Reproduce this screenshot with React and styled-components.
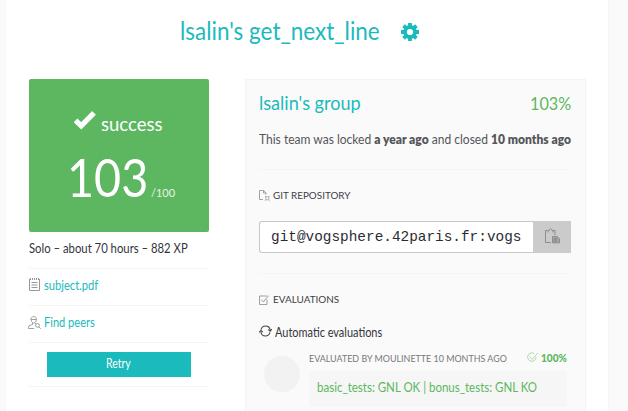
import React, { useLayoutEffect, useRef, useState } from "react";
import styled, { createGlobalStyle } from "styled-components";

const teal = "#1bbabc";
const green = "#5db761";

const GlobalStyle = createGlobalStyle`
  * { box-sizing: border-box; }
  body {
    margin: 0;
    overflow: hidden;
    background: #fafafa;
    font-family: Lato, "Open Sans", sans-serif;
    color: #33343c;
  }
`;

const Page = styled.main`
  width: 602px;
  height: 411px;
  margin-left: 6px;
  overflow: hidden;
  background: #fff;
  box-shadow: 0 0 0 1px #f5f5f5;
`;

const Title = styled.h1`
  display: flex;
  align-items: center;
  height: 61px;
  margin: 0 0 18px;
  padding: 1px 0 0 174px;
  gap: 21px;
  color: ${teal};
  font-size: 24.5px;
  font-weight: 400;
  line-height: 60px;
`;

const Columns = styled.div`
  display: flex;
  align-items: flex-start;
  gap: 36px;
  padding-left: 23px;
`;

const Sidebar = styled.aside`
  width: 180px;
`;

const ScoreCard = styled.section`
  height: 153px;
  padding: 32px 0 0 38px;
  border-radius: 2px;
  background: ${green};
  color: #fff;
`;

const Status = styled.div`
  display: flex;
  gap: 5px;
  height: 28px;
  padding-left: 7px;
  font-size: 18.5px;
  line-height: 27px;
`;

const Score = styled.div`
  display: flex;
  align-items: baseline;
  gap: 3px;
  margin-top: 6px;
  font-size: 53px;
  font-weight: 400;
  line-height: 64px;
`;

const ScoreMax = styled.span`
  font-size: 11px;
  font-weight: 400;
  line-height: 14px;
  opacity: 0.85;
`;

const SideRow = styled.div`
  display: flex;
  align-items: center;
  gap: ${(p) => p.$gap || 0}px;
  height: 37px;
  padding-bottom: ${(p) => p.$lift || 4}px;
  border-bottom: 1px solid #f4f4f4;
  color: ${(p) => (p.$link ? teal : "#33343c")};
  font-size: 12.6px;
`;

const ActionRow = styled(SideRow)`
  justify-content: center;
  height: 44px;
  padding: 0;
`;

const Button = styled.button`
  width: 144px;
  height: 25px;
  margin-bottom: 1px;
  padding: 0 1px 2px 0;
  border: 0;
  background: ${teal};
  color: #fff;
  font: 13px/23px Lato, sans-serif;
`;

const Panel = styled.section`
  width: 341px;
  height: 340px;
  padding: 0 14px 0 13px;
  border: 1px solid #f4f4f4;
  background: #fafafa;
`;

const TeamHeader = styled.header`
  display: flex;
  justify-content: space-between;
  align-items: baseline;
  height: 44px;
  color: ${teal};
  font-size: 19.5px;
  line-height: 45px;
`;

const TeamScore = styled.span`
  color: ${green};
  font-size: 17px;
`;

const LockInfo = styled.p`
  height: 46px;
  margin: 0;
  border-bottom: 1px solid #f5f5f5;
  color: #55565a;
  font-size: 12.5px;
  line-height: 32px;
  b { font-weight: 800; }
`;

const SectionTitle = styled.h2`
  display: flex;
  align-items: center;
  gap: ${(p) => p.$gap}px;
  height: 51px;
  margin: 0;
  padding-bottom: 1px;
  color: #3e3f45;
  font-size: 10.4px;
  font-weight: 400;
`;

const RepoField = styled.div`
  display: flex;
  height: 32px;
  margin-bottom: 20px;
`;

const RepoUrl = styled.div`
  width: 274px;
  padding-left: 11px;
  border: 1px solid #c8c8c8;
  border-right: 0;
  border-radius: 3px 0 0 3px;
  background: #fff;
  color: #2b2c33;
  font: 14.4px/31px "Liberation Mono", monospace;
`;

const CopyButton = styled.button`
  display: flex;
  align-items: center;
  justify-content: center;
  width: 38px;
  padding: 0 1px 3px 0;
  border: 0;
  background: #cbcbcb;
`;

const RepoBlock = styled.div`
  height: 104px;
  border-bottom: 1px solid #f5f5f5;
`;

const AutoTitle = styled.h3`
  display: flex;
  align-items: center;
  gap: 3px;
  height: 15px;
  margin: 0;
  font-size: 12.6px;
  font-weight: 400;
`;

const Evaluation = styled.article`
  display: grid;
  grid-template-columns: 36px 258px;
  gap: 9px;
  padding: 9px 0 0 5px;
`;

const Avatar = styled.div`
  width: 36px;
  height: 36px;
  margin-top: 7px;
  border-radius: 50%;
  background: #f2f2f2;
`;

const EvalHeader = styled.div`
  display: flex;
  align-items: center;
  height: 22px;
  padding-bottom: 4px;
  color: #77787b;
  font-size: 10.2px;
`;

const EvalScore = styled.span`
  display: flex;
  align-items: center;
  gap: 2px;
  margin-left: auto;
  color: ${green};
  font-size: 10.5px;
  font-weight: 900;
`;

const Feedback = styled.div`
  height: 36px;
  padding-left: 8px;
  border-radius: 2px;
  background: #f6f6f6;
  color: ${green};
  font-size: 12.6px;
  line-height: 34px;
`;

const FitBox = styled.span`
  display: inline-block;
  width: ${(p) => p.$width}px;
  white-space: nowrap;
`;

const FitText = styled.span`
  display: inline-block;
  transform-origin: 0 50%;
`;

/* Condenses or widens a line of text to a set width. */
function Fit({ width, children }) {
  const ref = useRef(null);
  const [scale, setScale] = useState(1);
  useLayoutEffect(() => {
    setScale(width / ref.current.offsetWidth);
  }, [width]);
  return (
    <FitBox $width={width}>
      <FitText ref={ref} style={{ transform: `scaleX(${scale})` }}>{children}</FitText>
    </FitBox>
  );
}

const Icon = styled.svg`
  display: block;
  flex: none;
  fill: none;
  stroke: ${(p) => p.$color || "#969696"};
  stroke-width: ${(p) => p.$stroke || 1};
  margin-top: ${(p) => p.$top || 0}px;
  margin-left: ${(p) => p.$left || 0}px;
`;

const GearIcon = () => (
  <Icon width="18" height="18" viewBox="0 0 18 18" $color={teal} $stroke={3.8} $top={1}>
    <circle cx="9" cy="9" r="5" />
    <path d="M9 0v4M9 14v4M0 9h4M14 9h4M2.6 2.6l2.8 2.8M12.6 12.6l2.8 2.8M2.6 15.4l2.8-2.8M12.6 5.4l2.8-2.8" />
  </Icon>
);

const CheckIcon = () => (
  <Icon width="22" height="19" viewBox="0 0 22 19" $color="#fff" $stroke={5.2}>
    <path d="M1.6 9.4 7.2 14.8 20 1.9" />
  </Icon>
);

const NotesIcon = () => (
  <Icon width="11" height="13" viewBox="0 0 11 13" $top={-2}>
    <path d="M.5 1v11.500h10V1" />
    <path d="M1 1h9" strokeWidth="2" strokeDasharray="1 1" />
    <path d="M2.500 4.500h6M2.500 7h6M2.500 9.500h6" />
  </Icon>
);

const PeersIcon = () => (
  <Icon width="13" height="13" viewBox="0 0 13 13" $stroke={0.9} $left={-1}>
    <path d="M3 4C3 1.500 4 .5 5.700.5S8.500 1.500 8.500 4M2.700 3.500h6M3.200 4c.2 2 1.200 3 2.600 3s2.300-1 2.500-3M4.500 7v1.500L1 9.700l-.6 2.800h5.800M7.300 7v1" />
    <circle cx="9.500" cy="9.400" r="1.900" />
    <path d="m10.800 10.800 2 2" />
  </Icon>
);

const RepoIcon = () => (
  <Icon width="11" height="11" viewBox="0 0 11 11" $stroke={0.9} $top={1}>
    <path d="M4 9.500H.5v-9h4.200L7 2.800v2M4.500.5V3H7" />
    <path d="M6.800 6.800h3v3h-3zM6 6l1 1M10.700 6l-1 1M6 10.700l1-1M10.700 10.700l-1-1" strokeWidth=".7" />
  </Icon>
);

const CheckboxIcon = () => (
  <Icon width="10" height="10" viewBox="0 0 10 10" $stroke={0.9} $top={1}>
    <path d="M8 1H.5v8.500H8V4.500M2.300 4.500l2 2.500L9.600.6" />
  </Icon>
);

const PasteIcon = () => (
  <Icon width="16" height="16" viewBox="0 0 16 16" $color="#8c8c8c">
    <path d="M7 14.500H1.500v-12h2M9 2.500h2V7M4 4.500V2.300h1.300C5.500 1.100 6 .8 6.500.8s1 .3 1.200 1.500H9v2.200" />
    <path d="M8.500 8.500H13l2.500 2.300v4h-7z" fill="#aaa" />
    <path d="M10 14v-3.500h3V14M11.500 11v3" />
  </Icon>
);

const RefreshIcon = () => (
  <Icon width="13" height="12" viewBox="0 0 13 12" $color="#44454a" $stroke={1.1} $top={-4}>
    <path d="M2 4.700C2.700 2.500 4.400 1 6.500 1c2.300 0 4.300 1.700 4.600 4M11 7.300C10.300 9.500 8.600 11 6.500 11c-2.300 0-4.300-1.700-4.600-4M9.200 4.600l2 1.600 1.600-2M.2 7.400l1.600-1.900 2 1.500" />
  </Icon>
);

const RoundCheckIcon = () => (
  <Icon width="12" height="11" viewBox="0 0 12 11" $color="#a3d6a5" $stroke={0.9} $top={-1}>
    <path d="M7.300 1.700A4.200 4.200 0 1 0 9 5M2.800 4.700l2.300 2.700L11 .9" />
  </Icon>
);

export default function App() {
  return (
    <>
      <GlobalStyle />
      <Page>
        <Title>
          <Fit width={200}>lsalin's get_next_line</Fit>
          <GearIcon />
        </Title>
        <Columns>
          <Sidebar>
            <ScoreCard>
              <Status>
                <CheckIcon />
                <Fit width={61}>success</Fit>
              </Status>
              <Score>
                <Fit width={81}>103</Fit>
                <ScoreMax><Fit width={24}>/100</Fit></ScoreMax>
              </Score>
            </ScoreCard>
            <SideRow $lift={3}><Fit width={159}>Solo – about 70 hours – 882 XP</Fit></SideRow>
            <SideRow $link $gap={4}>
              <NotesIcon />
              <Fit width={54}>subject.pdf</Fit>
            </SideRow>
            <SideRow $link $gap={3}>
              <PeersIcon />
              <Fit width={51}>Find peers</Fit>
            </SideRow>
            <ActionRow>
              <Button><Fit width={25}>Retry</Fit></Button>
            </ActionRow>
          </Sidebar>
          <Panel>
            <TeamHeader>
              <Fit width={102}>lsalin's group</Fit>
              <TeamScore><Fit width={41}>103%</Fit></TeamScore>
            </TeamHeader>
            <LockInfo>
              <Fit width={312}>
                This team was locked <b>a year ago</b> and closed <b>10 months ago</b>
              </Fit>
            </LockInfo>
            <RepoBlock>
              <SectionTitle $gap={3}>
                <RepoIcon />
                <Fit width={77}>GIT REPOSITORY</Fit>
              </SectionTitle>
              <RepoField>
                <RepoUrl>git@vogsphere.42paris.fr:vogs</RepoUrl>
                <CopyButton aria-label="Copy"><PasteIcon /></CopyButton>
              </RepoField>
            </RepoBlock>
            <SectionTitle $gap={4}>
              <CheckboxIcon />
              <Fit width={66}>EVALUATIONS</Fit>
            </SectionTitle>
            <AutoTitle>
              <RefreshIcon />
              <Fit width={107}>Automatic evaluations</Fit>
            </AutoTitle>
            <Evaluation>
              <Avatar />
              <div>
                <EvalHeader>
                  <Fit width={198}>EVALUATED BY MOULINETTE 10 MONTHS AGO</Fit>
                  <EvalScore>
                    <RoundCheckIcon />
                    <Fit width={26}>100%</Fit>
                  </EvalScore>
                </EvalHeader>
                <Feedback><Fit width={220}>basic_tests: GNL OK | bonus_tests: GNL KO</Fit></Feedback>
              </div>
            </Evaluation>
          </Panel>
        </Columns>
      </Page>
    </>
  );
}
